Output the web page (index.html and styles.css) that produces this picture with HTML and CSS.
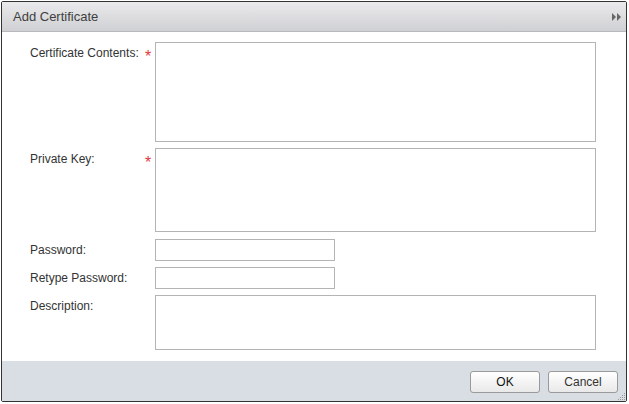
FILE: index.html
```html
<!DOCTYPE html>
<html lang="en">
<head>
    <meta charset="UTF-8">
    <meta name="viewport" content="width=device-width, initial-scale=1.0">
    <title>Add Certificate</title>
    <link rel="stylesheet" href="styles.css">
</head>
<body>
    <div class="dialog">
        <div class="dialogHeader">
            <span class="dialogTitle">Add Certificate</span>
            <svg class="collapseIcon" width="10" height="8" viewBox="0 0 10 8">
                <polygon points="0,0 4,4 0,8" fill="#666"/>
                <polygon points="5,0 9,4 5,8" fill="#666"/>
            </svg>
        </div>
        <div class="dialogBody">
            <div class="formRow">
                <label class="fieldLabel top">Certificate Contents:</label>
                <span class="required">*</span>
                <textarea class="field certContents"></textarea>
            </div>
            <div class="formRow">
                <label class="fieldLabel top">Private Key:</label>
                <span class="required">*</span>
                <textarea class="field privateKey"></textarea>
            </div>
            <div class="formRow gapLarge">
                <label class="fieldLabel">Password:</label>
                <span></span>
                <input type="password" class="field short">
            </div>
            <div class="formRow">
                <label class="fieldLabel">Retype Password:</label>
                <span></span>
                <input type="password" class="field short">
            </div>
            <div class="formRow">
                <label class="fieldLabel top">Description:</label>
                <span></span>
                <textarea class="field description"></textarea>
            </div>
        </div>
        <div class="dialogFooter">
            <button class="dialogButton okButton">OK</button>
            <button class="dialogButton">Cancel</button>
            <svg class="resizeGrip" width="10" height="10" viewBox="0 0 10 10">
                <g fill="#999">
                    <rect x="8" y="2" width="1" height="1"/>
                    <rect x="6" y="4" width="1" height="1"/>
                    <rect x="8" y="4" width="1" height="1"/>
                    <rect x="4" y="6" width="1" height="1"/>
                    <rect x="6" y="6" width="1" height="1"/>
                    <rect x="8" y="6" width="1" height="1"/>
                    <rect x="2" y="8" width="1" height="1"/>
                    <rect x="4" y="8" width="1" height="1"/>
                    <rect x="6" y="8" width="1" height="1"/>
                    <rect x="8" y="8" width="1" height="1"/>
                </g>
            </svg>
        </div>
    </div>
</body>
</html>
```

FILE: styles.css
```css
body {
    margin: 0;
    padding: 1px;
    background: #ffffff;
    font-family: 'Liberation Sans', 'Arial', sans-serif;
    font-size: 12px;
    color: #333333;
}

.dialog {
    width: 626px;
    height: 401px;
    box-sizing: border-box;
    border: 1px solid #333333;
    border-radius: 2px;
    display: flex;
    flex-direction: column;
    background: #ffffff;
}

.dialogHeader {
    height: 29px;
    border-bottom: 1px solid #b9b9bc;
    background: linear-gradient(#eaeaec, #cfd0d3);
    display: flex;
    align-items: center;
    justify-content: space-between;
    padding: 0 4px 0 11px;
}

.dialogTitle {
    font-size: 13px;
    color: #404040;
}

.collapseIcon {
    margin-top: 1px;
}

.dialogBody {
    flex: 1;
    padding: 10px 0 0 28px;
    display: flex;
    flex-direction: column;
    gap: 6px;
}

.formRow {
    display: grid;
    grid-template-columns: 115px 10px auto;
    align-items: center;
}

.formRow.gapLarge {
    margin-top: 1px;
}

.fieldLabel {
    color: #333333;
    line-height: 15px;
}

.fieldLabel.top {
    align-self: start;
    padding-top: 4px;
}

.required {
    align-self: start;
    color: #e23b3b;
    font-size: 16px;
    line-height: 16px;
    padding-top: 7px;
}

.field {
    box-sizing: border-box;
    margin: 0;
    border: 1px solid #b4b4b4;
    background: #ffffff;
    resize: none;
    font-family: inherit;
    font-size: 12px;
    padding: 2px 4px;
}

.certContents {
    width: 441px;
    height: 100px;
}

.privateKey {
    width: 441px;
    height: 84px;
}

.short {
    width: 180px;
    height: 22px;
}

.description {
    width: 441px;
    height: 55px;
}

.dialogFooter {
    height: 40px;
    background: #d9dde4;
    display: flex;
    align-items: center;
    justify-content: flex-end;
    gap: 8px;
    padding: 0 8px 0 0;
    position: relative;
}

.dialogButton {
    width: 70px;
    height: 22px;
    margin-top: 1px;
    border: 1px solid #9a9a9a;
    border-radius: 3px;
    background: linear-gradient(#ffffff, #e9e9e9);
    font-family: inherit;
    font-size: 12px;
    color: #333333;
    cursor: pointer;
}

.okButton {
    color: #111111;
}

.resizeGrip {
    position: absolute;
    right: 0;
    bottom: 0;
}
```
